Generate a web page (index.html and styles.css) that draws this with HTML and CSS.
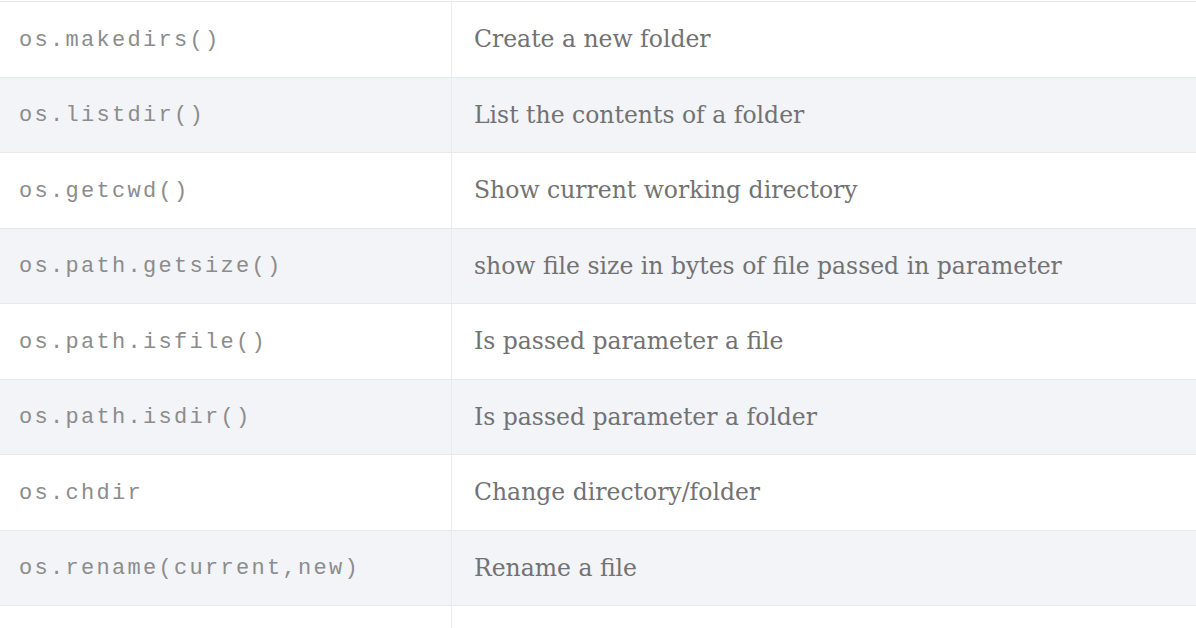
FILE: index.html
```html
<!DOCTYPE html>
<html lang="en">
<head>
  <meta charset="UTF-8">
  <title>os module</title>
  <link rel="stylesheet" href="styles.css">
</head>
<body>
<div class="table">
  <div class="row">
    <div class="cell code">os.makedirs()</div>
    <div class="cell desc">Create a new folder</div>
  </div>
  <div class="row">
    <div class="cell code">os.listdir()</div>
    <div class="cell desc">List the contents of a folder</div>
  </div>
  <div class="row">
    <div class="cell code">os.getcwd()</div>
    <div class="cell desc">Show current working directory</div>
  </div>
  <div class="row">
    <div class="cell code">os.path.getsize()</div>
    <div class="cell desc">show file size in bytes of file passed in parameter</div>
  </div>
  <div class="row">
    <div class="cell code">os.path.isfile()</div>
    <div class="cell desc">Is passed parameter a file</div>
  </div>
  <div class="row">
    <div class="cell code">os.path.isdir()</div>
    <div class="cell desc">Is passed parameter a folder</div>
  </div>
  <div class="row">
    <div class="cell code">os.chdir</div>
    <div class="cell desc">Change directory/folder</div>
  </div>
  <div class="row">
    <div class="cell code">os.rename(current,new)</div>
    <div class="cell desc">Rename a file</div>
  </div>
  <div class="row tail">
    <div class="cell code"></div>
    <div class="cell desc"></div>
  </div>
</div>
</body>
</html>
```

FILE: styles.css
```css
*{ margin: 0; padding: 0; box-sizing: border-box;}
html, body{ background: #fff; overflow: hidden;}
body{ font-family: "DejaVu Serif", serif; padding-top: 1px;}
.table{ border-top: 1px solid #e6e8eb; width: 100%;}
.row{ display: flex; height: 75.5px; border-bottom: 1px solid #e6e8eb; background: #fff;}
.row:nth-child(even){ background: #f2f4f7;}
.row.tail{ height: 22px; border-bottom: 0;}
.cell{ display: flex; align-items: center;}
.code{ width: 452px; padding-left: 19px; padding-top: 2px; border-right: 1px solid #e9ebee; font-family: "Liberation Mono", monospace; font-size: 22px; letter-spacing: 2.3px; color: #8c8c8c;}
.desc{ flex: 1; padding-left: 22px; font-size: 23.5px; color: #727272;}
```
